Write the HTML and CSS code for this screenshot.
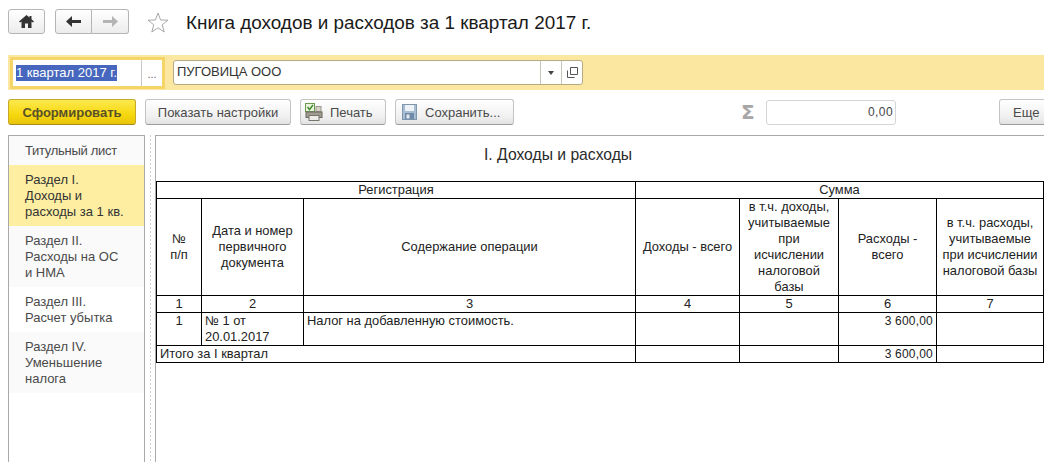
FILE: index.html
```html
<!DOCTYPE html>
<html lang="ru">
<head>
<meta charset="utf-8">
<title>Книга доходов и расходов</title>
<link rel="stylesheet" href="styles.css">
</head>
<body>
<div class="page">
  <header class="head">
    <button class="nav-btn home" aria-label="Домой">
      <svg width="15" height="13" viewBox="0 0 15 13"><path d="M7.5 0 L0 6.5 L1 7.6 L2.5 6.4 V13 H6 V8.5 H9 V13 H12.5 V6.4 L14 7.6 L15 6.5 L12.5 4.3 V1 H10.5 V2.6 Z" fill="#333"/></svg>
    </button>
    <div class="nav-group">
      <button class="nav-btn half" aria-label="Назад">
        <svg width="15" height="11" viewBox="0 0 15 11"><path d="M6 0 L0 5.5 L6 11 V7 H15 V4 H6 Z" fill="#333"/></svg>
      </button>
      <button class="nav-btn half" aria-label="Вперед">
        <svg width="15" height="11" viewBox="0 0 15 11"><path d="M9 0 L15 5.5 L9 11 V7 H0 V4 H9 Z" fill="#b4b4b4"/></svg>
      </button>
    </div>
    <svg class="star" width="22" height="21" viewBox="0 0 22 21"><path d="M11 1 L13.6 8 L21 8.2 L15.2 12.8 L17.2 20 L11 15.8 L4.8 20 L6.8 12.8 L1 8.2 L8.4 8 Z" fill="#fff" stroke="#a8a8a8"/></svg>
    <h1 class="title">Книга доходов и расходов за 1 квартал 2017 г.</h1>
  </header>

  <div class="filter">
    <div class="period">
      <div class="period-in"><span class="sel">1 квартал 2017 г.</span></div>
      <div class="dots">...</div>
    </div>
    <div class="org">
      <div class="org-text">ПУГОВИЦА ООО</div>
      <div class="org-btn"><span class="caret"></span></div>
      <div class="org-btn">
        <svg width="11" height="11" viewBox="0 0 11 11"><path d="M3.5 .5 H10.5 V7.5 H3.5 Z M.5 3.5 V10.5 H7.5" fill="none" stroke="#555"/></svg>
      </div>
    </div>
  </div>

  <div class="toolbar">
    <button class="btn primary">Сформировать</button>
    <button class="btn w-show">Показать настройки</button>
    <button class="btn w-print">
      <svg width="18" height="18" viewBox="0 0 18 18"><rect x=".5" y=".5" width="9" height="8" fill="#e8f3dc" stroke="#6b9a52"/><path d="M2.5 4 L4.5 6.5 L8 2" fill="none" stroke="#3f8a2a" stroke-width="1.4"/><rect x="11" y="3.5" width="5" height="5" fill="#d6d2c4" stroke="#9a968a"/><rect x="1" y="9" width="16" height="5.5" fill="#a09c90" stroke="#6a675e"/><rect x="4" y="12.5" width="10" height="5" fill="#eeece6" stroke="#77746b"/></svg>
      <span>Печать</span>
    </button>
    <button class="btn w-save">
      <svg width="15" height="16" viewBox="0 0 15 16"><rect x=".5" y=".5" width="14" height="15" fill="#a9bdd2" stroke="#7f97ae"/><rect x="3" y="1" width="9" height="6" fill="#eef2f6"/><rect x="3" y="9" width="9" height="6.5" fill="#6f8ba8"/><rect x="4.5" y="10.5" width="3" height="4" fill="#e3e9ef"/></svg>
      <span>Сохранить...</span>
    </button>
    <span class="sigma">Σ</span>
    <div class="sum">0,00</div>
    <button class="btn more">Еще</button>
  </div>

  <main class="work">
    <nav class="side">
      <div class="side-item first">Титульный лист</div>
      <div class="side-item on">Раздел I.<br>Доходы и<br>расходы за 1 кв.</div>
      <div class="side-item alt">Раздел II.<br>Расходы на ОС<br>и НМА</div>
      <div class="side-item plain">Раздел III.<br>Расчет убытка</div>
      <div class="side-item alt">Раздел IV.<br>Уменьшение<br>налога</div>
    </nav>
    <div class="split"></div>
    <section class="report">
      <div class="report-title">I. Доходы и расходы</div>
      <table class="grid">
        <colgroup>
          <col class="c1"><col class="c2"><col class="c3"><col class="c4"><col class="c5"><col class="c6"><col class="c7">
        </colgroup>
        <tr class="r-a"><td colspan="3">Регистрация</td><td colspan="4">Сумма</td></tr>
        <tr class="r-b">
          <td>№<br>п/п</td>
          <td>Дата и номер<br>первичного<br>документа</td>
          <td>Содержание операции</td>
          <td>Доходы - всего</td>
          <td>в т.ч. доходы,<br>учитываемые<br>при<br>исчислении<br>налоговой<br>базы</td>
          <td>Расходы -<br>всего</td>
          <td>в т.ч. расходы,<br>учитываемые<br>при исчислении<br>налоговой базы</td>
        </tr>
        <tr class="r-a num"><td>1</td><td>2</td><td>3</td><td>4</td><td>5</td><td>6</td><td>7</td></tr>
        <tr class="r-c">
          <td class="big">1</td>
          <td class="left">№ 1 от<br>20.01.2017</td>
          <td class="left">Налог на добавленную стоимость.</td>
          <td></td><td></td>
          <td class="right">3 600,00</td>
          <td></td>
        </tr>
        <tr class="r-a"><td colspan="3" class="left">Итого за I квартал</td><td></td><td></td><td class="right">3 600,00</td><td></td></tr>
      </table>
    </section>
  </main>
</div>
</body>
</html>
```
FILE: styles.css
```css
* { box-sizing: border-box; }
html, body { margin: 0; height: 100%; overflow: hidden; background: #fff; }
body { font-family: "Liberation Sans", Arial, sans-serif; font-size: 13px; color: #333; }
button { font-family: inherit; margin: 0; padding: 0; }
.page { width: 1044px; height: 462px; display: flex; flex-direction: column; overflow: hidden; }

.head { height: 55px; padding: 9px 0 0 8px; display: flex; align-items: flex-start; }
.nav-btn { height: 25px; border: 1px solid #b5b5b5; border-radius: 3px; background: linear-gradient(#fff, #ececec); display: flex; align-items: center; justify-content: center; }
.home { width: 37px; margin-right: 10px; }
.nav-group { display: flex; width: 74px; margin-right: 18px; }
.half { width: 37px; }
.half:first-child { border-radius: 3px 0 0 3px; }
.half:last-child { border-radius: 0 3px 3px 0; border-left: 0; }
.star { margin-top: 3px; margin-right: 17px; flex: none; }
.title { margin: 3px 0 0; font-size: 18.9px; line-height: 21px; font-weight: 400; color: #1a1a1a; white-space: nowrap; }

.filter { height: 35px; margin-left: 8px; background: #fbe79f; display: flex; align-items: center; padding-left: 2px; }
.period { width: 155px; height: 32px; border: 3px solid #f6d568; background: #fff; display: flex; }
.period-in { flex: 1; padding: 4px 0 0 3px; line-height: 17px; }
.sel { background: #4667bd; color: #fff; display: inline-block; height: 16px; line-height: 16px; }
.dots { width: 21px; border-left: 1px solid #c8c8c8; text-align: center; color: #666; line-height: 28px; font-size: 11px; }
.org { width: 410px; height: 25px; margin-left: 8px; border: 1px solid #b4ab86; border-radius: 3px; background: #fff; display: flex; align-items: stretch; }
.org-text { flex: 1; padding-left: 3px; line-height: 22px; }
.org-btn { width: 21px; border-left: 1px solid #c8c6b8; display: flex; align-items: center; justify-content: center; }
.caret { width: 0; height: 0; border: 3px solid transparent; border-top: 4px solid #444; border-bottom: 0; }

.toolbar { height: 45px; padding: 9px 0 0 8px; display: flex; align-items: flex-start; }
.btn { height: 26px; border: 1px solid #c4c4c4; border-bottom-color: #9c9c9c; border-radius: 3px; background: linear-gradient(#fff, #f0f0f0 70%, #e2e2e2); color: #4a4a4a; font-size: 13px; display: flex; align-items: center; justify-content: flex-start; flex: none; }
.primary { width: 128px; margin-right: 9px; justify-content: center; background: linear-gradient(#fce94e, #f7d80f 60%, #e8c40a); border-color: #c7a92a #c7a92a #a68a1c; font-weight: 700; color: #59502a; }
.w-show { width: 146px; margin-right: 9px; justify-content: center; }
.w-print { width: 86px; margin-right: 9px; padding-left: 4px; gap: 7px; }
.w-save { width: 119px; padding-left: 6px; gap: 8px; }
.sigma { margin: 3px 0 0 227px; width: 14px; flex: none; font: 700 20px/20px "DejaVu Sans", sans-serif; color: #a6a6a6; }
.sum { width: 130px; height: 25px; flex: none; margin: 1px 0 0 11px; border: 1px solid #d5d5d5; border-radius: 3px; text-align: right; padding-right: 2px; line-height: 23px; font-size: 12px; color: #444; letter-spacing: .4px; }
.more { width: 60px; margin-left: 103px; padding-left: 13px; }

.work { flex: 1; min-height: 0; margin-left: 8px; display: flex; }
.side { width: 137px; flex: none; border: 1px solid #a9a9a9; border-bottom: 0; line-height: 16px; color: #4a4a4a; }
.side-item { padding: 7px 6px 6px 16px; background: #fafafa; white-space: nowrap; }
.first { height: 29px; letter-spacing: -.3px; }
.on { background: #fdeea2; color: #333; height: 61px; }
.alt { height: 61px; }
.plain { background: #fff; height: 45px; }
.split { width: 10px; flex: none; background: linear-gradient(#d2d2d2 50%, transparent 50%) 5px 0 / 1px 4px repeat-y; }
.report { flex: 1; min-width: 0; border-left: 1px solid #a9a9a9; border-top: 1px solid #a9a9a9; }
.report-title { height: 45px; padding: 10px 0 0 328px; font-size: 15.7px; line-height: 18px; color: #2a2a2a; }
.grid { table-layout: fixed; width: 887px; border-collapse: collapse; color: #222; font-size: 12.9px; line-height: 16px; }
.grid td { border: 1px solid #000; padding: 0; text-align: center; vertical-align: middle; overflow: hidden; white-space: nowrap; }
.c1 { width: 45px; } .c2 { width: 102px; } .c3 { width: 332px; } .c4 { width: 104px; } .c5 { width: 99px; } .c6 { width: 98px; } .c7 { width: 107px; }
.r-a { height: 17px; }
.r-b { height: 97px; }
.r-c { height: 33px; }
.r-c td { vertical-align: top; }
.grid td.left { text-align: left; padding-left: 3px; }
.grid td.right { text-align: right; padding-right: 3px; font-size: 12px; letter-spacing: .2px; }
```
